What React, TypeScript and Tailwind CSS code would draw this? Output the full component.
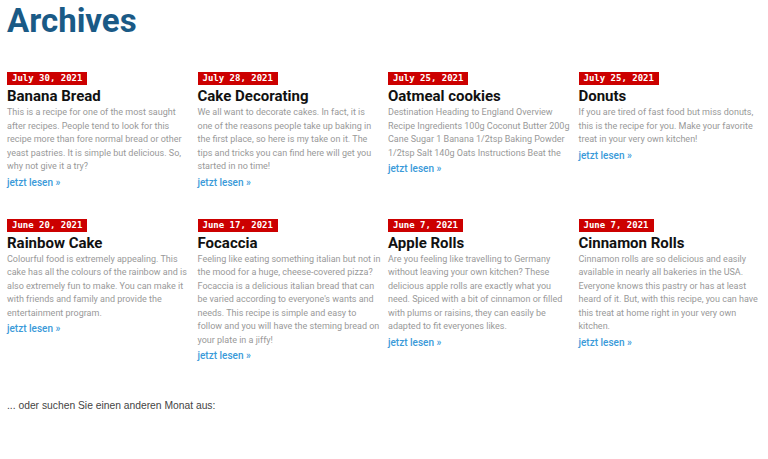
import React from "react";

type Post = {
  date: string;
  title: string;
  excerpt: string;
};

const posts: Post[] = [
  {
    date: "July 30, 2021",
    title: "Banana Bread",
    excerpt:
      "This is a recipe for one of the most saught after recipes. People tend to look for this recipe more than fore normal bread or other yeast pastries. It is simple but delicious. So, why not give it a try?",
  },
  {
    date: "July 28, 2021",
    title: "Cake Decorating",
    excerpt:
      "We all want to decorate cakes. In fact, it is one of the reasons people take up baking in the first place, so here is my take on it. The tips and tricks you can find here will get you started in no time!",
  },
  {
    date: "July 25, 2021",
    title: "Oatmeal cookies",
    excerpt:
      "Destination Heading to England Overview Recipe Ingredients 100g Coconut Butter 200g Cane Sugar 1 Banana 1/2tsp Baking Powder 1/2tsp Salt 140g Oats Instructions Beat the",
  },
  {
    date: "July 25, 2021",
    title: "Donuts",
    excerpt:
      "If you are tired of fast food but miss donuts, this is the recipe for you. Make your favorite treat in your very own kitchen!",
  },
  {
    date: "June 20, 2021",
    title: "Rainbow Cake",
    excerpt:
      "Colourful food is extremely appealing. This cake has all the colours of the rainbow and is also extremely fun to make. You can make it with friends and family and provide the entertainment program.",
  },
  {
    date: "June 17, 2021",
    title: "Focaccia",
    excerpt:
      "Feeling like eating something italian but not in the mood for a huge, cheese-covered pizza? Focaccia is a delicious italian bread that can be varied according to everyone's wants and needs. This recipe is simple and easy to follow and you will have the steming bread on your plate in a jiffy!",
  },
  {
    date: "June 7, 2021",
    title: "Apple Rolls",
    excerpt:
      "Are you feeling like travelling to Germany without leaving your own kitchen? These delicious apple rolls are exactly what you need. Spiced with a bit of cinnamon or filled with plums or raisins, they can easily be adapted to fit everyones likes.",
  },
  {
    date: "June 7, 2021",
    title: "Cinnamon Rolls",
    excerpt:
      "Cinnamon rolls are so delicious and easily available in nearly all bakeries in the USA. Everyone knows this pastry or has at least heard of it. But, with this recipe, you can have this treat at home right in your very own kitchen.",
  },
];

const PostCard: React.FC<{ post: Post }> = ({ post }) => {
  return (
    <article className="flex flex-col items-start pr-[4px]">
      <span className="bg-[#cc0000] text-white font-bold text-[9px] leading-[13px] px-[5px] font-['DejaVu_Sans_Mono',monospace]">
        {post.date}
      </span>
      <h2 className="mt-[1px] text-[15px] leading-[20px] font-bold text-[#111]">
        {post.title}
      </h2>
      <p className="text-[9px] leading-[13.5px] text-[#999]">{post.excerpt}</p>
      <a href="#" className="mt-[2px] text-[10px] leading-[14px] font-medium text-[#3a9ad9]">
        jetzt lesen »
      </a>
    </article>
  );
};

export default function App() {
  return (
    <div className="min-h-screen bg-white pl-[7px] pr-[1px] font-['Roboto',sans-serif]">
      <h1 className="pt-[3px] text-[33px] leading-[36px] font-bold text-[#1a5a86]">
        Archives
      </h1>
      <div className="mt-[33px] grid grid-cols-4 gap-x-[2px] gap-y-[29px]">
        {posts.map((p, i) => (
          <PostCard key={i} post={p} />
        ))}
      </div>
      <p className="mt-[35px] text-[10.3px] text-[#444] font-['Liberation_Sans',sans-serif]">
        ... oder suchen Sie einen anderen Monat aus:
      </p>
    </div>
  );
}
